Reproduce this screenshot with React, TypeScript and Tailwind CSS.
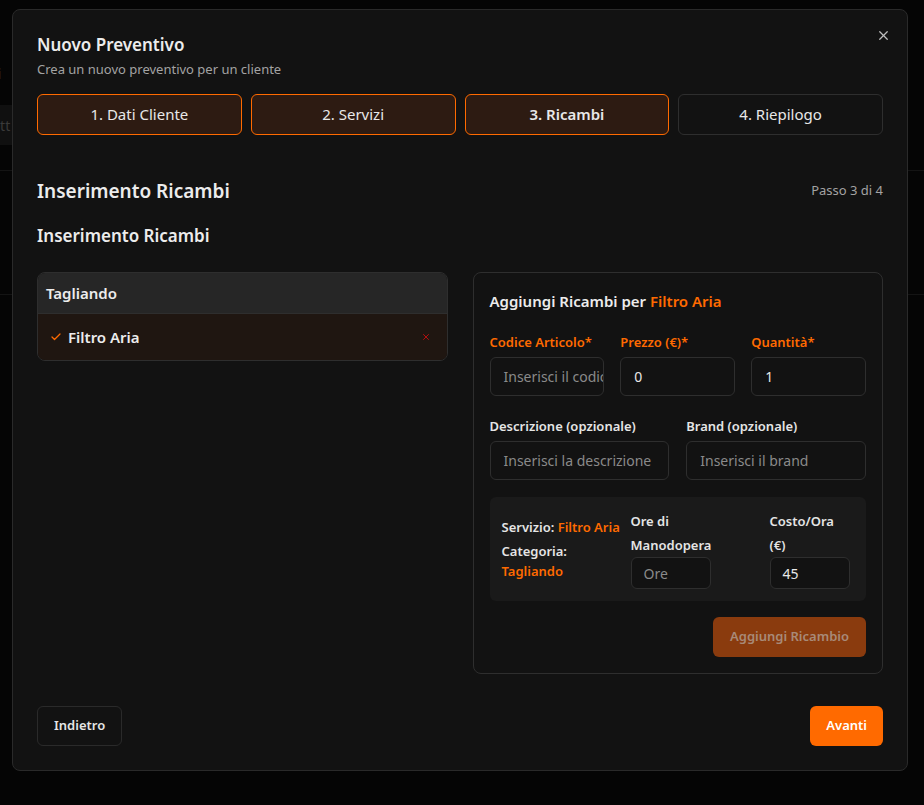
import { X, Check } from 'lucide-react';

const font = { fontFamily: '"Noto Sans", "Liberation Sans", sans-serif' };

function Step({ label, state }: { label: string; state: 'done' | 'active' | 'todo' }) {
  const cls =
    state === 'todo'
      ? 'border-[#2e2e2e] bg-transparent font-normal'
      : state === 'active'
        ? 'border-[#ff6a00] bg-[#2d1b12] font-semibold'
        : 'border-[#ff6a00] bg-[#2d1b12] font-normal';
  return (
    <div className={`flex h-[41px] items-center justify-center rounded-md border text-[15px] text-[#e8e8e8] ${cls}`}>
      {label}
    </div>
  );
}

function Field({ label, value, placeholder, required }: { label: string; value?: string; placeholder?: string; required?: boolean }) {
  return (
    <div className="flex flex-col">
      <label className={`mb-[5px] text-[13px] font-semibold leading-[20px] ${required ? 'text-[#ff6a00]' : 'text-[#e5e5e5]'}`}>
        {label}
      </label>
      <div className="flex h-[39px] items-center overflow-hidden whitespace-nowrap rounded-md border border-[#2e2e2e] bg-[#121212] px-[13px] text-[14px]">
        {value ? <span className="text-[#e8e8e8]">{value}</span> : <span className="text-[#8a8a8a]">{placeholder}</span>}
      </div>
    </div>
  );
}

export default function App() {
  return (
    <div className="relative h-[805px] w-[924px] overflow-hidden bg-[#050505]" style={font}>
      {/* page behind the dialog */}
      <div className="absolute left-[-40px] top-[63px] text-[14px] text-[#3a3a3a]">Clienti</div>
      <div className="absolute left-0 top-[105px] h-[40px] w-[12px] bg-[#101010]">
        <span className="absolute left-[-18px] top-[10px] text-[14px] text-[#3a3a3a]">Dett</span>
      </div>
      <div className="absolute left-0 top-[170px] h-[125px] w-[924px] border-y border-[#141414]" />

      <div className="absolute left-[12px] top-[9px] flex w-[896px] flex-col rounded-lg border border-[#2a2a2a] bg-[#121212] p-6">
        <button className="absolute right-[16px] top-[18px] text-[#bdbdbd]">
          <X size={15} strokeWidth={2} />
        </button>

        <h2 className="text-[17px] font-semibold leading-[22px] text-[#ececec]">Nuovo Preventivo</h2>
        <p className="mt-[3px] text-[13px] leading-[20px] text-[#a3a3a3]">Crea un nuovo preventivo per un cliente</p>

        <div className="mt-[15px] grid grid-cols-4 gap-[9px]">
          <Step label="1. Dati Cliente" state="done" />
          <Step label="2. Servizi" state="done" />
          <Step label="3. Ricambi" state="active" />
          <Step label="4. Riepilogo" state="todo" />
        </div>

        <div className="mt-[43px] flex items-center justify-between">
          <h3 className="text-[19px] font-semibold leading-[26px] text-[#ececec]">Inserimento Ricambi</h3>
          <span className="text-[13px] text-[#a3a3a3]">Passo 3 di 4</span>
        </div>

        <h4 className="mt-[21px] text-[17px] font-semibold leading-[22px] text-[#ececec]">Inserimento Ricambi</h4>

        <div className="mt-[25px] grid grid-cols-2 gap-[25px]">
          <div className="self-start overflow-hidden rounded-lg border border-[#2e2e2e]">
            <div className="flex h-[41px] items-center border-b border-[#2e2e2e] bg-[#262626] px-[8px] text-[15px] font-semibold text-[#ececec]">
              Tagliando
            </div>
            <div className="flex h-[46px] items-center justify-between bg-[#1f1611] pl-[12px] pr-[16px]">
              <div className="flex items-center gap-[6px]">
                <Check size={12} strokeWidth={2.5} className="text-[#ff6a00]" />
                <span className="text-[15px] font-semibold text-[#ececec]">Filtro Aria</span>
              </div>
              <X size={10} strokeWidth={2} className="text-[#d10f0f]" />
            </div>
          </div>

          <div className="rounded-lg border border-[#2e2e2e] px-4 pb-4 pt-[17px]">
            <h5 className="text-[15px] font-semibold leading-[22px] text-[#ececec]">
              Aggiungi Ricambi per <span className="text-[#ff6a00]">Filtro Aria</span>
            </h5>

            <div className="mt-[20px] grid grid-cols-3 gap-4">
              <Field label="Codice Articolo*" placeholder="Inserisci il codice" required />
              <Field label="Prezzo (€)*" value="0" required />
              <Field label="Quantità*" value="1" required />
            </div>

            <div className="mt-[20px] grid grid-cols-2 gap-[17px]">
              <Field label="Descrizione (opzionale)" placeholder="Inserisci la descrizione" />
              <Field label="Brand (opzionale)" placeholder="Inserisci il brand" />
            </div>

            <div className="mt-[17px] flex items-center rounded-md bg-[#1a1a1a] px-3 py-3">
              <div className="w-[129px] shrink-0 whitespace-nowrap text-[13px] font-semibold text-[#e5e5e5]">
                <div className="leading-[20px]">
                  Servizio: <span className="text-[#ff6a00]">Filtro Aria</span>
                </div>
                <div className="mt-[4px] leading-[20px]">Categoria:</div>
                <div className="leading-[20px] text-[#ff6a00]">Tagliando</div>
              </div>
              <div className="w-20 shrink-0">
                <div className="text-[13px] font-semibold leading-[24px] text-[#e5e5e5]">
                  Ore di
                  <br />
                  Manodopera
                </div>
                <div className="flex h-[32px] items-center rounded-md border border-[#2e2e2e] bg-[#121212] px-[12px] text-[14px] text-[#8a8a8a]">
                  Ore
                </div>
              </div>
              <div className="ml-[59px] w-20 shrink-0">
                <div className="text-[13px] font-semibold leading-[24px] text-[#e5e5e5]">
                  Costo/Ora
                  <br />
                  (€)
                </div>
                <div className="flex h-[32px] items-center rounded-md border border-[#2e2e2e] bg-[#121212] px-[12px] text-[14px] text-[#e8e8e8]">
                  45
                </div>
              </div>
            </div>

            <div className="mt-4 flex justify-end">
              <button className="h-[40px] rounded-md bg-[#8a3b0e] px-[17px] text-[13px] font-semibold text-[#a88a78]">
                Aggiungi Ricambio
              </button>
            </div>
          </div>
        </div>

        <div className="mt-[32px] flex items-center justify-between">
          <button className="h-[40px] rounded-md border border-[#2a2a2a] px-4 text-[13px] font-semibold text-[#e5e5e5]">
            Indietro
          </button>
          <button className="h-[40px] rounded-md bg-[#ff6a00] px-4 text-[13px] font-semibold text-white">Avanti</button>
        </div>
      </div>
    </div>
  );
}
